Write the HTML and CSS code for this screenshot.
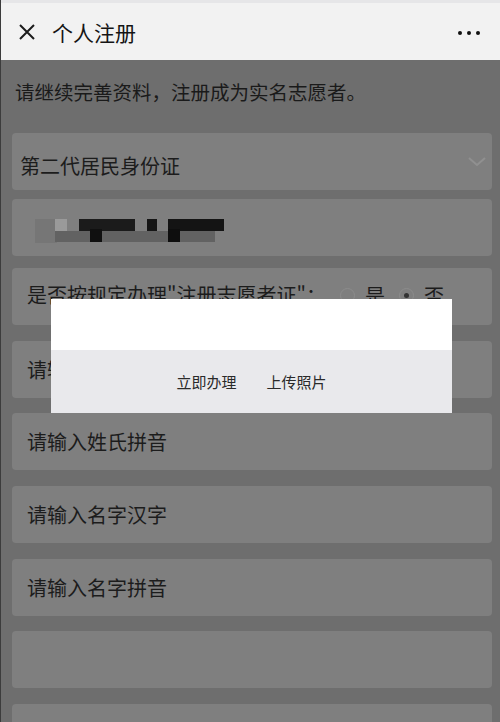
FILE: index.html
```html
<!DOCTYPE html>
<html lang="zh-CN">
<head>
  <meta charset="UTF-8">
  <meta name="viewport" content="width=device-width, initial-scale=1.0">
  <title>个人注册</title>
  <link rel="stylesheet" href="styles.css">
</head>
<body>
  <div class="app">
    <header class="navbar">
      <svg class="close-icon" width="18" height="18" viewBox="0 0 18 18">
        <path d="M2 2 L16 16 M16 2 L2 16" stroke="#1c1c1c" stroke-width="2" fill="none"/>
      </svg>
      <span class="nav-title">个人注册</span>
      <span class="nav-more"><i></i><i></i><i></i></span>
    </header>

    <main class="content">
      <p class="intro">请继续完善资料，注册成为实名志愿者。</p>

      <div class="field field-select">
        <span class="field-text">第二代居民身份证</span>
        <svg class="chevron" width="20" height="12" viewBox="0 0 20 12">
          <path d="M2 2 L10 9 L18 2" stroke="#909090" stroke-width="2" fill="none"/>
        </svg>
      </div>

      <div class="field field-id">
        <svg class="mosaic" width="192" height="26" viewBox="0 0 192 26">
          <rect x="0" y="0" width="22" height="24" fill="#767676"/>
          <rect x="20" y="0" width="12" height="12" fill="#9a9a9a"/>
          <rect x="20" y="12" width="160" height="11" fill="#626262"/>
          <rect x="44" y="0" width="56" height="12" fill="#1b1b1b"/>
          <rect x="55" y="10" width="12" height="13" fill="#101010"/>
          <rect x="112" y="0" width="10" height="12" fill="#151515"/>
          <rect x="133" y="0" width="56" height="12" fill="#141414"/>
          <rect x="133" y="10" width="12" height="13" fill="#0e0e0e"/>
        </svg>
      </div>

      <div class="field field-radio">
        <span class="field-text">是否按规定办理"注册志愿者证"：</span>
        <span class="radio-group">
          <span class="radio"></span><span class="radio-label">是</span>
          <span class="radio radio-checked"></span><span class="radio-label">否</span>
        </span>
      </div>

      <div class="field"><span class="field-text">请输入姓氏汉字</span></div>
      <div class="field"><span class="field-text">请输入姓氏拼音</span></div>
      <div class="field"><span class="field-text">请输入名字汉字</span></div>
      <div class="field"><span class="field-text">请输入名字拼音</span></div>
      <div class="field"></div>
      <div class="field"></div>
    </main>

    <div class="dialog">
      <div class="dialog-body"></div>
      <div class="dialog-actions">
        <span class="dialog-btn">立即办理</span>
        <span class="dialog-btn">上传照片</span>
      </div>
    </div>
  </div>
</body>
</html>
```

FILE: styles.css
```css
html, body {
  margin: 0;
  padding: 0;
}

body {
  font-family: "Noto Sans CJK SC", "Noto Sans", sans-serif;
  background-color: #6e6e6e;
  height: 722px;
  overflow: hidden;
}

.app {
  position: relative;
  height: 722px;
  overflow: hidden;
  border-left: 1px solid #3c3c3c;
}

.navbar {
  height: 57px;
  border-top: 3px solid #e6e6e8;
  background-color: #f2f2f2;
  display: flex;
  align-items: center;
  padding: 0 20px 0 17px;
  color: #151515;
}

.close-icon {
  margin-top: 1px;
}

.nav-title {
  margin-left: 16px;
  font-size: 21px;
  line-height: 1;
  margin-top: 1px;
}

.nav-more {
  margin-left: auto;
  display: flex;
  gap: 5px;
  margin-top: 2px;
}

.nav-more i {
  display: block;
  width: 4px;
  height: 4px;
  border-radius: 50%;
  background-color: #111;
}

.content {
  padding: 0 8px 0 11px;
}

.intro {
  margin: 0 0 27px;
  padding: 18px 0 0 3px;
  font-size: 19.5px;
  line-height: 28px;
  color: #1a1a1a;
}

.field {
  height: 57px;
  margin-bottom: 15.7px;
  background-color: #7f7f7f;
  border-radius: 4px;
  display: flex;
  align-items: center;
  padding: 0 15px;
  color: #1c1c1c;
  font-size: 20px;
}

.field-select {
  padding-left: 8px;
  margin-bottom: 9px;
}

.field-select .field-text {
  margin-top: 8px;
}

.chevron {
  margin-left: auto;
  margin-right: -10px;
}

.field-id {
  padding-left: 23px;
  margin-bottom: 12px;
}

.mosaic {
  margin-top: 9px;
}

.field-radio .field-text {
  margin-top: -5px;
  white-space: nowrap;
}

.radio-group {
  display: flex;
  align-items: center;
  margin-left: 14px;
  margin-top: -3px;
}

.radio {
  width: 13px;
  height: 13px;
  border: 1px solid #8c8c8c;
  border-radius: 50%;
  margin-right: 10px;
  position: relative;
}

.radio-checked::after {
  content: "";
  position: absolute;
  left: 4px;
  top: 4px;
  width: 5px;
  height: 5px;
  border-radius: 50%;
  background-color: #333;
}

.radio-label {
  margin-right: 14px;
}

.radio-label:last-child {
  margin-right: 0;
}

.dialog {
  position: absolute;
  top: 299px;
  left: 50px;
  width: 401px;
}

.dialog-body {
  height: 51px;
  background-color: #ffffff;
}

.dialog-actions {
  height: 63px;
  background-color: #e9e9ec;
  display: flex;
  justify-content: center;
  align-items: center;
  gap: 30px;
}

.dialog-btn {
  font-size: 15px;
  color: #2a2a2a;
  line-height: 1;
}
```
